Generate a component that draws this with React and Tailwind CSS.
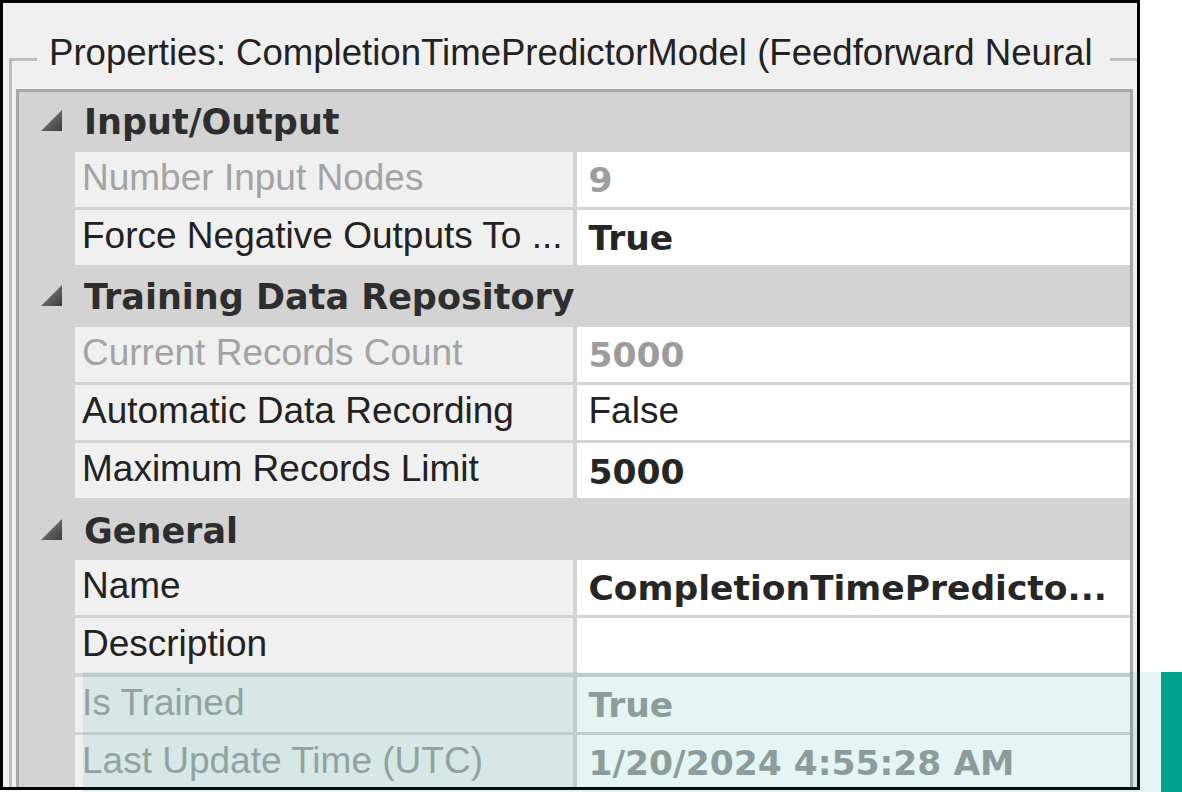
import React from "react";

const sans = { fontFamily: '"Liberation Sans", Arial, sans-serif' };
const bold = { fontFamily: '"DejaVu Sans", Verdana, sans-serif' };

const sections = [
  {
    title: "Input/Output",
    rows: [
      { label: "Number Input Nodes", value: "9", disabled: true, strong: true },
      { label: "Force Negative Outputs To ...", value: "True", strong: true },
    ],
  },
  {
    title: "Training Data Repository",
    rows: [
      { label: "Current Records Count", value: "5000", disabled: true, strong: true },
      { label: "Automatic Data Recording", value: "False" },
      { label: "Maximum Records Limit", value: "5000", strong: true },
    ],
  },
  {
    title: "General",
    rows: [
      { label: "Name", value: "CompletionTimePredicto...", strong: true },
      { label: "Description", value: "" },
      { label: "Is Trained", value: "True", disabled: true, strong: true },
      { label: "Last Update Time (UTC)", value: "1/20/2024 4:55:28 AM", disabled: true, strong: true },
    ],
  },
];

const Expander = () => (
  <svg width="21" height="21" viewBox="0 0 21 21" className="ml-[22px] shrink-0">
    <defs>
      <linearGradient id="tri" x1="0" y1="0" x2="1" y2="1">
        <stop offset="0" stopColor="#8a8a8a" />
        <stop offset="1" stopColor="#3c3c3c" />
      </linearGradient>
    </defs>
    <polygon points="0,21 21,21 21,0" fill="url(#tri)" />
  </svg>
);

const CategoryRow = ({ title }) => (
  <div className="h-[55px] flex items-center bg-[#d3d3d3] shrink-0">
    <Expander />
    <span style={bold} className="ml-[22px] pt-[4px] text-[35px] leading-[35px] font-bold text-[#2e2e2e] whitespace-nowrap">
      {title}
    </span>
  </div>
);

const PropertyRow = ({ label, value, disabled, strong }) => (
  <div className="h-[55px] flex gap-[3.5px] ml-[56px] shrink-0">
    <div className="w-[498px] bg-[#f0f0f0] flex items-center pl-[7px] pb-[4px] overflow-hidden">
      <span
        style={sans}
        className={`text-[37px] leading-[37px] whitespace-nowrap ${disabled ? "text-[#a3a3a3]" : "text-[#222222]"}`}
      >
        {label}
      </span>
    </div>
    <div className="flex-1 bg-white flex items-center pl-[12px] overflow-hidden">
      {strong ? (
        <span
          style={bold}
          className={`text-[34.5px] leading-[35px] pt-[3px] font-bold whitespace-nowrap ${disabled ? "text-[#9c9c9c]" : "text-[#262626]"}`}
        >
          {value}
        </span>
      ) : (
        <span style={sans} className="pb-[4px] text-[37px] leading-[37px] whitespace-nowrap text-[#222222]">
          {value}
        </span>
      )}
    </div>
  </div>
);

export default function App() {
  return (
    <div className="relative w-[1182px] h-[792px] bg-white overflow-hidden">
      {/* Window frame */}
      <div className="w-[1140px] h-[790px] border-[3px] border-black bg-[#f0f0f0] overflow-hidden pt-[30px]">
        <fieldset className="ml-[6px] w-[1300px] border-l-[3px] border-t-[3px] border-r-0 border-b-0 border-[#bdbdbd]">
          <legend
            style={sans}
            className="ml-[25px] pl-[12px] pr-[17px] pb-[12px] text-[36.6px] leading-[40px] text-[#222222] whitespace-nowrap"
          >
            Properties: CompletionTimePredictorModel (Feedforward Neural
          </legend>

          {/* Property grid */}
          <div className="mt-[4px] ml-[4px] w-[1117px] border-[3px] border-b-0 border-[#a8a8a8] bg-[#d3d3d3] pt-[1.33px] flex flex-col gap-[3.33px]">
            {sections.map((s) => (
              <React.Fragment key={s.title}>
                <CategoryRow title={s.title} />
                {s.rows.map((r) => (
                  <PropertyRow key={r.label} {...r} />
                ))}
              </React.Fragment>
            ))}
          </div>
        </fieldset>
      </div>

      {/* Highlight overlay */}
      <div className="absolute left-[83px] top-[672px] w-[1078px] h-[120px] bg-[#00a08c]/10 pointer-events-none" />
      <div className="absolute left-[1161px] top-[672px] w-[21px] h-[120px] bg-[#00a08c]" />
    </div>
  );
}
